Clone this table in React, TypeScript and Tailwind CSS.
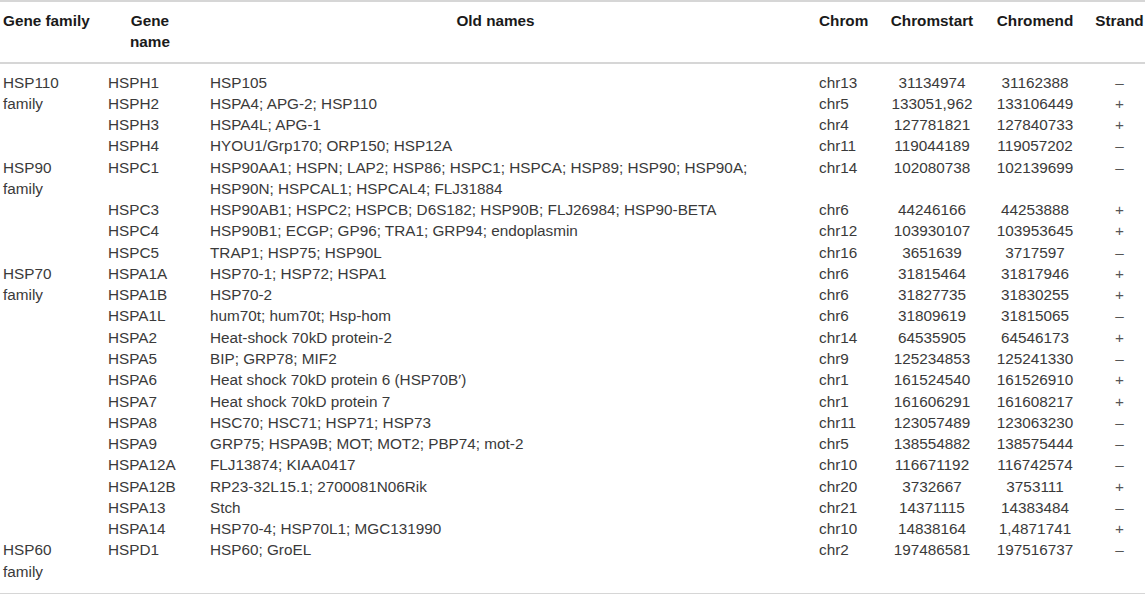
const cols = "grid grid-cols-[105px_90px_603px_80px_108px_98px_61px]";

type Row = {
  name: string;
  old: React.ReactNode;
  chrom: string;
  start: string;
  end: string;
  strand: string;
};

type Group = { family: string; rows: Row[]; span: string };

const groups: Group[] = [
  {
    family: "HSP110",
    span: "row-span-4",
    rows: [
      { name: "HSPH1", old: "HSP105", chrom: "chr13", start: "31134974", end: "31162388", strand: "–" },
      { name: "HSPH2", old: "HSPA4; APG-2; HSP110", chrom: "chr5", start: "133051,962", end: "133106449", strand: "+" },
      { name: "HSPH3", old: "HSPA4L; APG-1", chrom: "chr4", start: "127781821", end: "127840733", strand: "+" },
      { name: "HSPH4", old: "HYOU1/Grp170; ORP150; HSP12A", chrom: "chr11", start: "119044189", end: "119057202", strand: "–" },
    ],
  },
  {
    family: "HSP90",
    span: "row-span-4",
    rows: [
      {
        name: "HSPC1",
        old: (
          <>
            HSP90AA1; HSPN; LAP2; HSP86; HSPC1; HSPCA; HSP89; HSP90; HSP90A;
            <br />
            HSP90N; HSPCAL1; HSPCAL4; FLJ31884
          </>
        ),
        chrom: "chr14",
        start: "102080738",
        end: "102139699",
        strand: "–",
      },
      { name: "HSPC3", old: "HSP90AB1; HSPC2; HSPCB; D6S182; HSP90B; FLJ26984; HSP90-BETA", chrom: "chr6", start: "44246166", end: "44253888", strand: "+" },
      { name: "HSPC4", old: "HSP90B1; ECGP; GP96; TRA1; GRP94; endoplasmin", chrom: "chr12", start: "103930107", end: "103953645", strand: "+" },
      { name: "HSPC5", old: "TRAP1; HSP75; HSP90L", chrom: "chr16", start: "3651639", end: "3717597", strand: "–" },
    ],
  },
  {
    family: "HSP70",
    span: "row-span-13",
    rows: [
      { name: "HSPA1A", old: "HSP70-1; HSP72; HSPA1", chrom: "chr6", start: "31815464", end: "31817946", strand: "+" },
      { name: "HSPA1B", old: "HSP70-2", chrom: "chr6", start: "31827735", end: "31830255", strand: "+" },
      { name: "HSPA1L", old: "hum70t; hum70t; Hsp-hom", chrom: "chr6", start: "31809619", end: "31815065", strand: "–" },
      { name: "HSPA2", old: "Heat-shock 70kD protein-2", chrom: "chr14", start: "64535905", end: "64546173", strand: "+" },
      { name: "HSPA5", old: "BIP; GRP78; MIF2", chrom: "chr9", start: "125234853", end: "125241330", strand: "–" },
      { name: "HSPA6", old: "Heat shock 70kD protein 6 (HSP70B′)", chrom: "chr1", start: "161524540", end: "161526910", strand: "+" },
      { name: "HSPA7", old: "Heat shock 70kD protein 7", chrom: "chr1", start: "161606291", end: "161608217", strand: "+" },
      { name: "HSPA8", old: "HSC70; HSC71; HSP71; HSP73", chrom: "chr11", start: "123057489", end: "123063230", strand: "–" },
      { name: "HSPA9", old: "GRP75; HSPA9B; MOT; MOT2; PBP74; mot-2", chrom: "chr5", start: "138554882", end: "138575444", strand: "–" },
      { name: "HSPA12A", old: "FLJ13874; KIAA0417", chrom: "chr10", start: "116671192", end: "116742574", strand: "–" },
      { name: "HSPA12B", old: "RP23-32L15.1; 2700081N06Rik", chrom: "chr20", start: "3732667", end: "3753111", strand: "+" },
      { name: "HSPA13", old: "Stch", chrom: "chr21", start: "14371115", end: "14383484", strand: "–" },
      { name: "HSPA14", old: "HSP70-4; HSP70L1; MGC131990", chrom: "chr10", start: "14838164", end: "1,4871741", strand: "+" },
    ],
  },
  {
    family: "HSP60",
    span: "row-span-1",
    rows: [
      { name: "HSPD1", old: "HSP60; GroEL", chrom: "chr2", start: "197486581", end: "197516737", strand: "–" },
    ],
  },
];

export default function App() {
  return (
    <div className="w-[1145px] h-[594px] bg-white overflow-hidden font-['Liberation_Sans',Arial,sans-serif] text-[15.3px] leading-[21.26px]">
      <div className="border-y-2 border-[#d6d6d6]">
        {/* header */}
        <div className={`${cols} border-b-2 border-[#d6d6d6] pt-[8px] pb-[9px] font-bold text-[#1a1a1a]`}>
          <div className="pl-[3px] whitespace-nowrap">Gene family</div>
          <div className="text-center">
            Gene
            <br />
            name
          </div>
          <div className="pl-[15px] pr-[17px] text-center">Old names</div>
          <div className="pl-[21px] whitespace-nowrap">Chrom</div>
          <div className="text-center whitespace-nowrap">Chromstart</div>
          <div className="text-center whitespace-nowrap">Chromend</div>
          <div className="pl-[10px] text-center whitespace-nowrap">Strand</div>
        </div>

        {/* body */}
        <div className={`${cols} pt-[8px] pb-[11px] text-[#3a3a3a]`}>
          {groups.map((g) => [
            <div key={g.family} className={`${g.span} pl-[3px] col-start-1`}>
              {g.family}
              <br />
              family
            </div>,
            ...g.rows.map((r) => [
              <div key={r.name + "n"} className="col-start-2 pl-[3px]">{r.name}</div>,
              <div key={r.name + "o"} className="pl-[15px]">{r.old}</div>,
              <div key={r.name + "c"} className="pl-[21px]">{r.chrom}</div>,
              <div key={r.name + "s"} className="text-center">{r.start}</div>,
              <div key={r.name + "e"} className="text-center">{r.end}</div>,
              <div key={r.name + "d"} className="pl-[10px] text-center text-[#555]">{r.strand}</div>,
            ]),
          ])}
        </div>
      </div>
    </div>
  );
}
